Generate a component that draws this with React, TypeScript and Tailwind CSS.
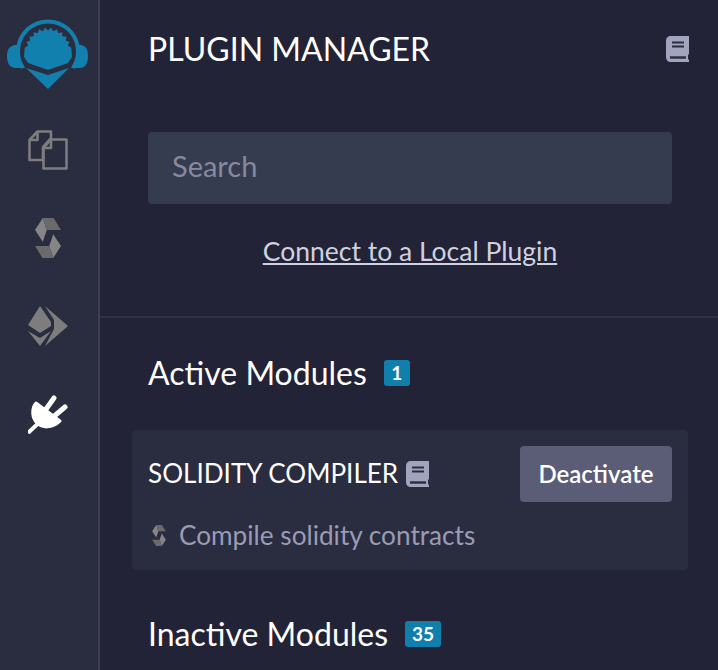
const font = { fontFamily: '"Lato", "Noto Sans", sans-serif' };

// sunburst teeth for the logo, page coords around the centre of the dial
const gearPoints = () => {
  const pts: string[] = ["24,57"];
  const cx = 48;
  const cy = 51;
  for (let i = 0; i <= 22; i++) {
    const a = ((-172 + (i * 164) / 22) * Math.PI) / 180;
    const r = i % 2 === 0 ? 23.5 : 20.5;
    pts.push(`${(cx + r * Math.cos(a)).toFixed(1)},${(cy + r * Math.sin(a)).toFixed(1)}`);
  }
  pts.push("72,57", "68,63", "48,70", "28,63");
  return pts.join(" ");
};

const Logo = () => (
  <svg width="84" height="72" viewBox="6 18 84 72" className="block">
    <path d="M23 68 A30 30 0 1 1 73 68" fill="none" stroke="#1180ae" strokeWidth="4" />
    <path d="M20 45 C11 44 7 48 7 56 C7 64 10 68 16 68 L25 68 C19 61 18 52 20 45 Z" fill="#1180ae" />
    <path d="M76 45 C85 44 88 48 88 56 C88 64 85 68 80 68 L71 68 C77 61 78 52 76 45 Z" fill="#1180ae" />
    <polygon points={gearPoints()} fill="#1180ae" />
    <path d="M26 68 L48 75 L69 68 L48 89 Z" fill="#1180ae" />
  </svg>
);

const CopyIcon = () => (
  <svg width="40" height="40" viewBox="0 0 40 40" fill="none" stroke="#7d7d7d" strokeWidth="2.6" strokeLinejoin="round">
    <path d="M1.5 10 L9.5 1.5 H23 V9 H22 L15 17 V30 H1.5 Z" />
    <path d="M9.5 1.5 V10 H1.5" />
    <path d="M23 9.5 H38.5 V38.5 H15.5 V18 Z" />
    <path d="M23 9.5 V18 H15.5" />
  </svg>
);

const SolidityIcon = ({ width, height }: { width: number; height: number }) => (
  <svg width={width} height={height} viewBox="45 25 77 118" className="block">
    <path d="M68 25 L45 60 L68 95 L80 60 Z" fill="#858585" />
    <path d="M68 25 H100 L122 60 H80 Z" fill="#6a6a6a" />
    <path d="M99 143 L122 108 L99 73 L87 108 Z" fill="#858585" />
    <path d="M99 143 H67 L45 108 H87 Z" fill="#6a6a6a" />
  </svg>
);

const EthIcon = () => (
  <svg width="40" height="40" viewBox="0 0 40 40" fill="#7d7d7d">
    <path d="M12 0 L23 16 L23 20 L12 27 L0 19 Z" />
    <path d="M17 0 L40 20 L17 40 L26 23 L26 14 Z" />
    <path d="M0 25 L12 32 L23 25 L12 40 Z" />
  </svg>
);

const PlugIcon = () => (
  <svg width="40" height="40" viewBox="0 0 40 40" fill="none" stroke="#fff" strokeLinecap="round">
    <path d="M18 22 L0 39" strokeWidth="4" strokeLinecap="butt" />
    <path d="M26 4 L16 18 M37 13 L24 24" strokeWidth="5" />
    <path d="M8 9 L32 27 C24 35 14 34 9 29 C4 24 3 15 8 9 Z" fill="#fff" stroke="#fff" strokeWidth="3" strokeLinejoin="round" />
  </svg>
);

const BookIcon = () => (
  <svg width="23" height="26" viewBox="0 0 23 26">
    <path d="M5 0 H23 V18 L22 19 V23 L23 24 V26 H5 C2 26 0 24 0 21 V5 C0 2 2 0 5 0 Z" fill="#a2a3bd" />
    <path d="M6 6.5 H18 M6 10.5 H18" stroke="#2a2c3f" strokeWidth="1.8" />
    <path d="M4 21.5 H20" stroke="#2a2c3f" strokeWidth="2.4" />
  </svg>
);

const Badge = ({ n }: { n: string }) => (
  <span className="flex h-[26px] min-w-[26px] items-center justify-center rounded-[3px] bg-[#117fab] px-[7px] text-[19px] font-bold text-white">{n}</span>
);

export default function App() {
  return (
    <div style={font} className="flex h-[670px] w-[718px] overflow-hidden bg-[#222336] text-white">
      <aside className="flex w-[100px] shrink-0 flex-col border-r-2 border-[#3b3e54] bg-[#2a2c3f]">
        <div className="mt-[18px] pl-[6px]"><Logo /></div>
        <div className="flex flex-col gap-[48px] pl-[28px] pt-[40px]">
          <CopyIcon />
          <div className="h-[40px] pl-[7px]"><SolidityIcon width={26} height={40} /></div>
          <EthIcon />
          <PlugIcon />
        </div>
      </aside>
      <main className="flex-1">
        <header className="flex h-[97px] items-center justify-between pl-[48px] pr-[29px]">
          <h1 className="text-[32px] leading-none">PLUGIN MANAGER</h1>
          <BookIcon />
        </header>
        <div className="pl-[48px] pr-[46px] pt-[35px]">
          <div className="flex h-[72px] items-center rounded-[4px] bg-[#353c50] px-[24px] pb-[4px] text-[29px] text-[#88899f]">Search</div>
          <div className="mt-[30px] py-[1px] text-center text-[26.5px] leading-[32px] text-[#d0d1e0] underline">Connect to a Local Plugin</div>
        </div>
        <div className="mt-[48px] flex items-center gap-[17px] border-t-2 border-[#2f3146] pl-[48px] pt-[35px]">
          <h2 className="text-[32px] leading-[40px]">Active Modules</h2>
          <Badge n="1" />
        </div>
        <div className="ml-[32px] mr-[30px] mt-[37px] h-[140px] rounded-[4px] bg-[#2a2c3f] px-[16px] pt-[16px]">
          <div className="flex h-[56px] items-center justify-between">
            <div className="flex items-center gap-[8px]">
              <span className="text-[26.1px]">SOLIDITY COMPILER</span>
              <BookIcon />
            </div>
            <button className="h-[56px] w-[152px] rounded-[4px] bg-[#5b5d77] text-[24px] font-semibold text-white">Deactivate</button>
          </div>
          <div className="mt-[15px] flex items-center gap-[13px] pl-[4px] text-[26.2px] leading-[36px] text-[#9a9bb5]">
            <SolidityIcon width={14} height={21} />
            <span>Compile solidity contracts</span>
          </div>
        </div>
        <div className="mt-[44px] flex items-center gap-[17px] pl-[48px]">
          <h2 className="text-[32px] leading-[40px]">Inactive Modules</h2>
          <Badge n="35" />
        </div>
      </main>
    </div>
  );
}
